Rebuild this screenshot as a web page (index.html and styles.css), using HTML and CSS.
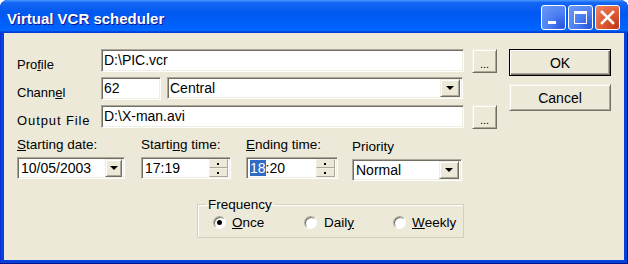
FILE: index.html
```html
<!DOCTYPE html>
<html lang="en">
<head>
    <meta charset="UTF-8">
    <title>Virtual VCR scheduler</title>
    <link rel="stylesheet" href="styles.css">
</head>
<body>
    <div class="window">
        <!-- Barra de titulo -->
        <div class="titlebar">
            <span class="title">Virtual VCR scheduler</span>
            <div class="caption-buttons">
                <span class="cap-btn">
                    <svg width="25" height="25" viewBox="0 0 25 25"><rect x="7" y="16" width="8" height="3" fill="#fff"/></svg>
                </span>
                <span class="cap-btn">
                    <svg width="25" height="25" viewBox="0 0 25 25"><rect x="6.5" y="6.5" width="12" height="12" fill="none" stroke="#fff"/><rect x="6" y="6" width="13" height="3" fill="#fff"/></svg>
                </span>
                <span class="cap-btn close">
                    <svg width="25" height="25" viewBox="0 0 25 25"><path d="M7 7 L18 18 M18 7 L7 18" stroke="#fff" stroke-width="2.6" stroke-linecap="square"/></svg>
                </span>
            </div>
        </div>

        <div class="client">
            <div class="top">
                <div class="fields">
                    <div class="row">
                        <label class="lbl">Pro<u>f</u>ile</label>
                        <div class="edit wide">D:\PIC.vcr</div>
                        <button class="btn dots">...</button>
                    </div>
                    <div class="row">
                        <label class="lbl">Chann<u>e</u>l</label>
                        <div class="edit channel">62</div>
                        <div class="edit combo station">
                            <span class="combo-text">Central</span>
                            <span class="drop wide-drop"></span>
                        </div>
                    </div>
                    <div class="row">
                        <label class="lbl spaced">Output File</label>
                        <div class="edit wide">D:\X-man.avi</div>
                        <button class="btn dots">...</button>
                    </div>
                </div>
                <div class="actions">
                    <button class="btn default">OK</button>
                    <button class="btn">Cancel</button>
                </div>
            </div>

            <div class="schedule">
                <div class="col date-col">
                    <label class="col-lbl"><u>S</u>tarting date:</label>
                    <div class="edit combo">
                        <span class="combo-text">10/05/2003</span>
                        <span class="drop"></span>
                    </div>
                </div>
                <div class="col start-col">
                    <label class="col-lbl">Starti<u>n</u>g time:</label>
                    <div class="edit combo">
                        <span class="combo-text">17:19</span>
                        <span class="spin"><span class="spin-up"></span><span class="spin-down"></span></span>
                    </div>
                </div>
                <div class="col end-col">
                    <label class="col-lbl"><u>E</u>nding time:</label>
                    <div class="edit combo">
                        <span class="combo-text"><span class="selected">18</span>:20</span>
                        <span class="spin"><span class="spin-up"></span><span class="spin-down"></span></span>
                    </div>
                </div>
                <div class="col priority-col">
                    <label class="col-lbl">Priority</label>
                    <div class="edit combo">
                        <span class="combo-text">Normal</span>
                        <span class="drop wide-drop"></span>
                    </div>
                </div>
            </div>

            <fieldset class="frequency">
                <legend>Frequency</legend>
                <div class="radios">
                    <span class="radio-item once"><span class="radio checked"></span><u>O</u>nce</span>
                    <span class="radio-item daily"><span class="radio"></span>Dail<u>y</u></span>
                    <span class="radio-item"><span class="radio"></span><u>W</u>eekly</span>
                </div>
            </fieldset>
        </div>
    </div>
</body>
</html>
```

FILE: styles.css
```css
/* Estilo geral */
html, body {
    margin: 0;
    padding: 0;
    background: #fff;
}

body {
    font-family: "Liberation Sans", Arial, sans-serif;
    font-size: 13px;
    color: #000;
}

.window {
    width: 628px;
    height: 264px;
    box-sizing: border-box;
    display: flex;
    flex-direction: column;
    background: #0841d8;
    border-radius: 8px 8px 0 0;
    box-shadow: inset -1px -1px #00138c, inset 1px 0 #0831d9;
    overflow: hidden;
}

/* Barra de titulo */
.titlebar {
    height: 33px;
    flex: 0 0 33px;
    display: flex;
    align-items: center;
    padding: 0 8px 0 7px;
    background: linear-gradient(to bottom, #4a9aff 0%, #1466f4 8%, #0058f0 40%, #0064fe 86%, #0068ff 92%, #003dd7 97%, #003dd7 100%);
}

.title {
    color: #fff;
    font-weight: bold;
    font-size: 15px;
    padding-top: 4px;
    text-shadow: 1px 1px #0f1089;
}

.caption-buttons {
    margin-left: auto;
    display: flex;
    gap: 2px;
    padding-top: 2px;
}

.cap-btn {
    width: 25px;
    height: 25px;
    box-sizing: border-box;
    border: 1px solid #fff;
    border-radius: 3px;
    display: flex;
    align-items: center;
    justify-content: center;
    background: radial-gradient(circle at 90% 90%, #2a56dc 0%, #4a7ef2 45%, #6e9af8 100%);
}

.cap-btn svg {
    margin: -1px;
}

.cap-btn.close {
    background: radial-gradient(circle at 90% 90%, #c13b18 0%, #e05a34 50%, #ec8a68 100%);
}

/* Area do dialogo */
.client {
    flex: 1;
    margin: 0 4px 4px;
    background: #ece9d8;
    padding: 16px 0 0 13px;
}

.top {
    display: flex;
}

.fields {
    display: flex;
    flex-direction: column;
    gap: 5px;
}

.row {
    display: flex;
    height: 23px;
}

.lbl {
    width: 84px;
    padding-top: 8px;
    line-height: 15px;
    white-space: nowrap;
}

.lbl.spaced {
    letter-spacing: 0.9px;
}

/* Campos afundados */
.edit {
    box-sizing: border-box;
    height: 23px;
    background: #fff;
    border: 1px solid;
    border-color: #aca899 #fff #fff #aca899;
    box-shadow: inset 1px 1px #716f64, inset -1px -1px #f1efe2;
    font-size: 14px;
    line-height: 16px;
    padding: 2px 2px 0 2px;
    white-space: nowrap;
}

.edit.wide {
    width: 363px;
}

.edit.channel {
    width: 60px;
}

.edit.station {
    width: 296px;
    margin-left: 6px;
    height: 22px;
}

.combo {
    display: flex;
    align-items: flex-start;
}

.combo-text {
    flex: 1;
}

.drop {
    width: 17px;
    height: 18px;
    margin: -1px 0 0 0;
    box-sizing: border-box;
    background: #ece9d8;
    border: 1px solid;
    border-color: #f1efe2 #716f64 #716f64 #f1efe2;
    box-shadow: inset 1px 1px #fff, inset -1px -1px #aca899;
    position: relative;
}

.drop.wide-drop {
    width: 20px;
}

.drop::after {
    content: "";
    position: absolute;
    left: 50%;
    top: 6px;
    margin-left: -4px;
    border-left: 4px solid transparent;
    border-right: 4px solid transparent;
    border-top: 4px solid #000;
}

/* Botoes */
.btn {
    box-sizing: border-box;
    background: #ece9d8;
    border: 1px solid;
    border-color: #f1efe2 #716f64 #716f64 #f1efe2;
    box-shadow: inset 1px 1px #fff, inset -1px -1px #aca899;
    font-family: "Liberation Sans", Arial, sans-serif;
    font-size: 13px;
    color: #000;
    padding: 0;
}

.btn.dots {
    width: 25px;
    height: 24px;
    margin-left: 8px;
    font-size: 11px;
    padding-top: 5px;
}

.actions {
    display: flex;
    flex-direction: column;
    gap: 8px;
    margin-left: 12px;
}

.actions .btn {
    width: 102px;
    height: 27px;
    font-size: 14px;
}

.btn.default {
    border: 1px solid #000;
    box-shadow: inset 1px 1px #fff, inset -1px -1px #716f64, inset -2px -2px #aca899;
}

/* Linha de agendamento */
.schedule {
    display: flex;
    margin-top: 9px;
}

.col {
    display: flex;
    flex-direction: column;
    gap: 5px;
}

.col-lbl {
    line-height: 15px;
    font-size: 13.5px;
    white-space: nowrap;
}

.col .edit {
    height: 22px;
    padding-left: 3px;
}

.date-col { width: 108px; }
.start-col { width: 90px; margin-left: 16px; }
.end-col { width: 92px; margin-left: 15px; }
.priority-col { width: 110px; margin-left: 14px; padding-top: 2px; }

.spin {
    width: 19px;
    height: 18px;
    display: flex;
    flex-direction: column;
    margin-top: -1px;
}

.spin-up, .spin-down {
    flex: 1;
    box-sizing: border-box;
    background: #ece9d8;
    border: 1px solid;
    border-color: #f1efe2 #aca899 #aca899 #f1efe2;
    position: relative;
}

.spin-up::after, .spin-down::after {
    content: "";
    position: absolute;
    left: 7px;
    top: 3px;
    width: 2px;
    height: 2px;
    background: #000;
}

.selected {
    background: #316ac5;
    color: #fff;
}

/* Grupo de frequencia */
.frequency {
    box-sizing: border-box;
    width: 267px;
    margin: 16px 0 0 180px;
    padding: 0 0 7px 0;
    border: 1px solid #d0d0bf;
    box-shadow: inset 1px 1px #fff;
    min-width: 0;
}

.frequency legend {
    margin-left: 8px;
    padding: 0 2px;
    line-height: 15px;
    font-size: 13.5px;
}

.radios {
    display: flex;
    padding: 3px 0 0 15px;
    line-height: 15px;
    font-size: 13.5px;
}

.radio-item {
    display: flex;
    align-items: center;
}

.radio-item.once { width: 91px; }
.radio-item.daily { width: 89px; }

.radio {
    width: 13px;
    height: 13px;
    box-sizing: border-box;
    border-radius: 50%;
    border: 1px solid;
    border-color: #aca899 #fff #fff #aca899;
    box-shadow: inset 1px 1px #716f64;
    background: #fff;
    margin-right: 6px;
    position: relative;
}

.radio.checked::after {
    content: "";
    position: absolute;
    left: 3px;
    top: 3px;
    width: 5px;
    height: 5px;
    border-radius: 50%;
    background: #000;
}

.radio-item.daily .radio { margin-right: 7px; }
```
